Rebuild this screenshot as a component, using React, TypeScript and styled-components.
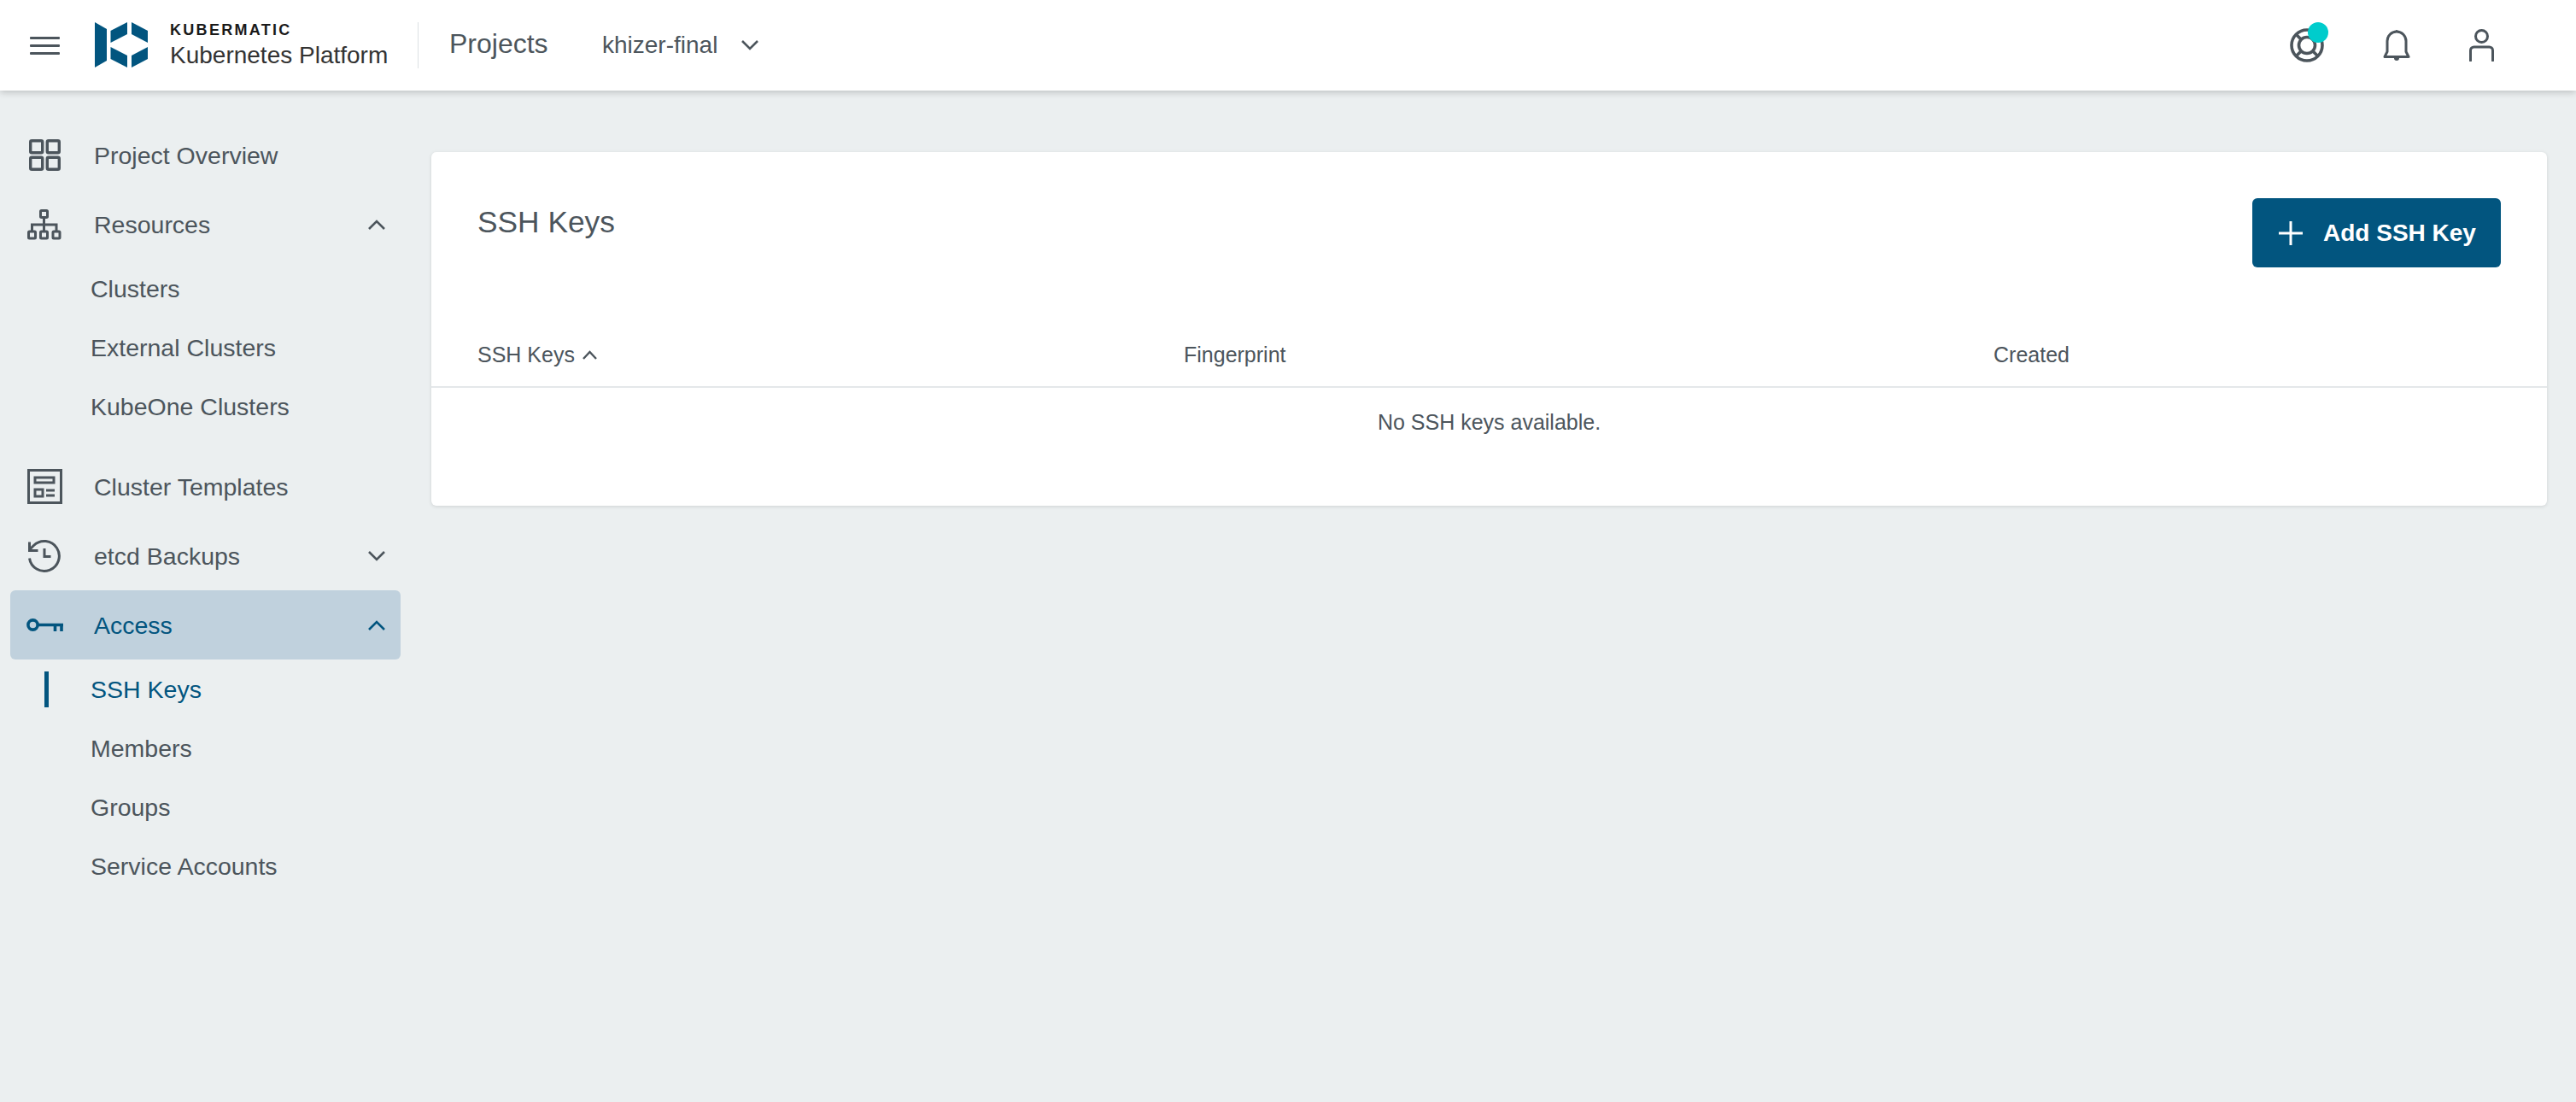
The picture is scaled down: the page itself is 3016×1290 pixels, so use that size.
import React from "react";
import styled, { createGlobalStyle } from "styled-components";

const ink = "#4c555c";
const brand = "#02557f";

const GlobalStyle = createGlobalStyle`
  html, body {
    margin: 0;
    padding: 0;
    background: #ebeff0;
  }
  body {
    font-family: "Liberation Sans", Arial, sans-serif;
    color: ${ink};
  }
`;

const Page = styled.div`
  display: flex;
  flex-direction: column;
  height: 1290px;
  overflow: hidden;
`;

const Toolbar = styled.header`
  display: flex;
  align-items: center;
  flex: 0 0 106px;
  height: 106px;
  padding: 0 96px 0 35px;
  background: #fff;
  box-shadow: 0 2px 8px rgba(0, 0, 0, 0.2);
  position: relative;
  z-index: 2;
`;

const MenuIcon = styled.svg`
  width: 35px;
  height: 21px;
  margin-right: 41px;
`;

const LogoMark = styled.svg`
  width: 62px;
  height: 54px;
  margin-right: 26px;
`;

const Brand = styled.div`
  display: flex;
  flex-direction: column;
  width: 290px;
  height: 54px;
  justify-content: space-between;
`;

const BrandTop = styled.span`
  font-size: 18px;
  line-height: 18px;
  font-weight: 700;
  letter-spacing: 2.3px;
  color: #1a1a1a;
`;

const BrandBottom = styled.span`
  font-size: 28px;
  line-height: 30px;
  color: #333;
  margin-top: 2px;
`;

const Divider = styled.div`
  width: 1px;
  height: 54px;
  background: #dde1e3;
  margin-right: 36px;
`;

const PageName = styled.div`
  font-size: 32px;
  width: 179px;
  padding-bottom: 3px;
`;

const ProjectName = styled.div`
  font-size: 28px;
  margin-right: 28px;
  padding-bottom: 1px;
`;

const Spacer = styled.div`
  flex: 1;
`;

const ActionIcons = styled.div`
  display: flex;
  align-items: center;
  gap: 69px;
`;

const ActionIcon = styled.div`
  position: relative;
  display: flex;
`;

const Dot = styled.span`
  position: absolute;
  top: -7px;
  right: -5px;
  width: 24px;
  height: 24px;
  border-radius: 50%;
  background: #00cccc;
`;

const Body = styled.div`
  display: flex;
  flex: 1;
`;

const Sidebar = styled.nav`
  flex: 0 0 505px;
  width: 505px;
  box-sizing: border-box;
  padding: 35px 36px 0 12px;
`;

const NavRow = styled.div<{ $active?: boolean; $gap?: boolean }>`
  display: flex;
  align-items: center;
  height: 81px;
  border-radius: 6px;
  font-size: 28.5px;
  color: ${(p) => (p.$active ? brand : ink)};
  background: ${(p) => (p.$active ? "#c0d1dd" : "transparent")};
  margin-top: ${(p) => (p.$gap ? "19px" : "0")};
`;

const NavIconSlot = styled.span`
  display: flex;
  align-items: center;
  justify-content: center;
  flex: 0 0 98px;
  width: 98px;
  padding-right: 18px;
  box-sizing: border-box;
`;

const NavLabel = styled.span`
  flex: 1;
  padding-top: 1px;
`;

const Chevron = styled.svg`
  width: 20px;
  height: 12px;
  margin-right: 18px;
`;

const SubRow = styled.div<{ $active?: boolean }>`
  position: relative;
  display: flex;
  align-items: center;
  height: 69px;
  padding: 2px 0 0 94px;
  box-sizing: border-box;
  font-size: 28.5px;
  color: ${(p) => (p.$active ? brand : ink)};
`;

const SubMarker = styled.span`
  position: absolute;
  left: 40px;
  top: 14px;
  width: 5px;
  height: 42px;
  background: ${brand};
`;

const Main = styled.main`
  flex: 1;
  padding: 72px 34px 0 0;
`;

const Card = styled.section`
  height: 414px;
  background: #fff;
  border-radius: 6px;
  box-shadow: 0 1px 4px rgba(0, 0, 0, 0.12);
`;

const CardHead = styled.div`
  display: flex;
  justify-content: space-between;
  align-items: flex-start;
  height: 204px;
  padding: 54px 54px 0 54px;
  box-sizing: border-box;
`;

const Title = styled.h2`
  margin: 5px 0 0;
  font-size: 35.3px;
  line-height: 46px;
  font-weight: 400;
`;

const AddButton = styled.button`
  display: flex;
  align-items: center;
  width: 291px;
  height: 81px;
  margin-top: 0;
  padding: 0 0 0 31px;
  border: 0;
  border-radius: 6px;
  background: ${brand};
  color: #fff;
  font: 700 28px "Liberation Sans", Arial, sans-serif;
`;

const PlusIcon = styled.svg`
  width: 28px;
  height: 28px;
  margin-right: 24px;
`;

const HeadRow = styled.div`
  display: grid;
  grid-template-columns: 827px 948px 1fr;
  align-items: center;
  height: 72px;
  padding: 0 54px 4px;
  box-sizing: border-box;
  border-bottom: 2px solid #e4e8ea;
  font-size: 25px;
`;

const HeadCell = styled.div`
  display: flex;
  align-items: center;
`;

const SortIcon = styled.svg`
  width: 17px;
  height: 11px;
  margin-left: 9px;
`;

const EmptyRow = styled.div`
  height: 80px;
  display: flex;
  align-items: center;
  justify-content: center;
  font-size: 25px;
`;

const Up = ({ color = ink }: { color?: string }) => (
  <Chevron viewBox="0 0 20 12" fill="none" stroke={color} strokeWidth="2.6">
    <path d="M1 11l9-9 9 9" />
  </Chevron>
);

const Down = () => (
  <Chevron viewBox="0 0 20 12" fill="none" stroke={ink} strokeWidth="2.6">
    <path d="M1 1l9 9 9-9" />
  </Chevron>
);

const GridIcon = () => (
  <svg width="37" height="37" viewBox="0 0 37 37" fill="none" stroke={ink} strokeWidth="3.4">
    <rect x="1.7" y="1.7" width="14" height="14" rx="1.5" />
    <rect x="21.3" y="1.7" width="14" height="14" rx="1.5" />
    <rect x="1.7" y="21.3" width="14" height="14" rx="1.5" />
    <rect x="21.3" y="21.3" width="14" height="14" rx="1.5" />
  </svg>
);

const TreeIcon = () => (
  <svg width="40" height="36" viewBox="0 0 40 36" fill="none" stroke={ink} strokeWidth="3">
    <rect x="15.5" y="1.5" width="8" height="8" rx="1" />
    <rect x="1.5" y="26" width="8" height="8" rx="1" />
    <rect x="15.5" y="26" width="8" height="8" rx="1" />
    <rect x="30" y="26" width="8" height="8" rx="1" />
    <path d="M19.5 9.5V26M5.5 26v-8h28.5v8" />
  </svg>
);

const TemplateIcon = () => (
  <svg width="41" height="41" viewBox="0 0 41 41" fill="none" stroke={ink} strokeWidth="3">
    <rect x="1.5" y="1.5" width="38" height="38" />
    <rect x="9" y="10" width="22" height="6" />
    <rect x="9" y="24" width="9" height="8" />
    <path d="M22 25h10M22 31h10" />
  </svg>
);

const HistoryIcon = () => (
  <svg width="40" height="40" viewBox="0 0 40 40" fill="none" stroke={ink} strokeWidth="3">
    <path d="M2.5 22.5A17.5 17.5 0 1 0 7.5 7.5L3 12" />
    <path d="M2.5 3.5V13.5H12.5" />
    <path d="M20 11v9.5h7.5" />
  </svg>
);

const KeyIcon = () => (
  <svg width="43" height="16" viewBox="0 0 43 16" fill="none" stroke={brand} strokeWidth="3.6">
    <circle cx="7.5" cy="7.5" r="5.6" />
    <path d="M13 7.5h30M33.5 7.5V15M41 7.5V15" />
  </svg>
);

const BuoyIcon = () => (
  <svg width="40" height="40" viewBox="0 0 40 40" fill="none" stroke={ink} strokeWidth="3.6">
    <circle cx="20" cy="20" r="18" />
    <circle cx="20" cy="20" r="9.5" />
    <path d="M7 7l6.5 6.5M33 7l-6.5 6.5M7 33l6.5-6.5M33 33l-6.5-6.5" />
  </svg>
);

const BellIcon = () => (
  <svg width="32" height="38" viewBox="0 0 32 38" fill="none" stroke={ink} strokeWidth="3">
    <path d="M2 32.5l3-6V14a11 11 0 0 1 22 0v12.5l3 6z" strokeLinejoin="round" />
    <circle cx="16" cy="2.5" r="1.5" fill={ink} stroke="none" />
    <path d="M13 34a3 3 0 0 0 6 0z" fill={ink} stroke="none" />
  </svg>
);

const UserIcon = () => (
  <svg width="29" height="38" viewBox="0 0 29 38" fill="none" stroke={ink} strokeWidth="3">
    <circle cx="14.5" cy="8.5" r="7" />
    <path d="M1.5 37V25a4 4 0 0 1 4-4h18a4 4 0 0 1 4 4v12" strokeLinecap="round" />
  </svg>
);

const App: React.FC = () => {
  return (
    <Page>
      <GlobalStyle />
      <Toolbar>
        <MenuIcon viewBox="0 0 35 21" fill={ink}>
          <rect y="0" width="35" height="3" rx="1" />
          <rect y="9" width="35" height="3" rx="1" />
          <rect y="18" width="35" height="3" rx="1" />
        </MenuIcon>
        <LogoMark viewBox="0 0 62 54" fill={brand}>
          <path d="M0 0l14 8v37L0 53z" />
          <path d="M18.5 10L38 0v14L18.5 24z" />
          <path d="M43 0l19 10v14L43 14z" />
          <path d="M18.5 29L38 39v14L18.5 43z" />
          <path d="M43 39l19-10v14L43 53z" />
        </LogoMark>
        <Brand>
          <BrandTop>KUBERMATIC</BrandTop>
          <BrandBottom>Kubernetes Platform</BrandBottom>
        </Brand>
        <Divider />
        <PageName>Projects</PageName>
        <ProjectName>khizer-final</ProjectName>
        <Down />
        <Spacer />
        <ActionIcons>
          <ActionIcon>
            <BuoyIcon />
            <Dot />
          </ActionIcon>
          <ActionIcon>
            <BellIcon />
          </ActionIcon>
          <ActionIcon>
            <UserIcon />
          </ActionIcon>
        </ActionIcons>
      </Toolbar>
      <Body>
        <Sidebar>
          <NavRow>
            <NavIconSlot><GridIcon /></NavIconSlot>
            <NavLabel>Project Overview</NavLabel>
          </NavRow>
          <NavRow>
            <NavIconSlot><TreeIcon /></NavIconSlot>
            <NavLabel>Resources</NavLabel>
            <Up />
          </NavRow>
          <SubRow>Clusters</SubRow>
          <SubRow>External Clusters</SubRow>
          <SubRow>KubeOne Clusters</SubRow>
          <NavRow $gap>
            <NavIconSlot><TemplateIcon /></NavIconSlot>
            <NavLabel>Cluster Templates</NavLabel>
          </NavRow>
          <NavRow>
            <NavIconSlot><HistoryIcon /></NavIconSlot>
            <NavLabel>etcd Backups</NavLabel>
            <Down />
          </NavRow>
          <NavRow $active>
            <NavIconSlot><KeyIcon /></NavIconSlot>
            <NavLabel>Access</NavLabel>
            <Up color={brand} />
          </NavRow>
          <SubRow $active>
            <SubMarker />
            SSH Keys
          </SubRow>
          <SubRow>Members</SubRow>
          <SubRow>Groups</SubRow>
          <SubRow>Service Accounts</SubRow>
        </Sidebar>
        <Main>
          <Card>
            <CardHead>
              <Title>SSH Keys</Title>
              <AddButton>
                <PlusIcon viewBox="0 0 28 28" stroke="#fff" strokeWidth="3">
                  <path d="M14 0v28M0 14h28" />
                </PlusIcon>
                Add SSH Key
              </AddButton>
            </CardHead>
            <HeadRow>
              <HeadCell>
                SSH Keys
                <SortIcon viewBox="0 0 17 11" fill="none" stroke={ink} strokeWidth="2.4">
                  <path d="M1 10l7.5-8 7.5 8" />
                </SortIcon>
              </HeadCell>
              <HeadCell>Fingerprint</HeadCell>
              <HeadCell>Created</HeadCell>
            </HeadRow>
            <EmptyRow>No SSH keys available.</EmptyRow>
          </Card>
        </Main>
      </Body>
    </Page>
  );
};

export default App;
